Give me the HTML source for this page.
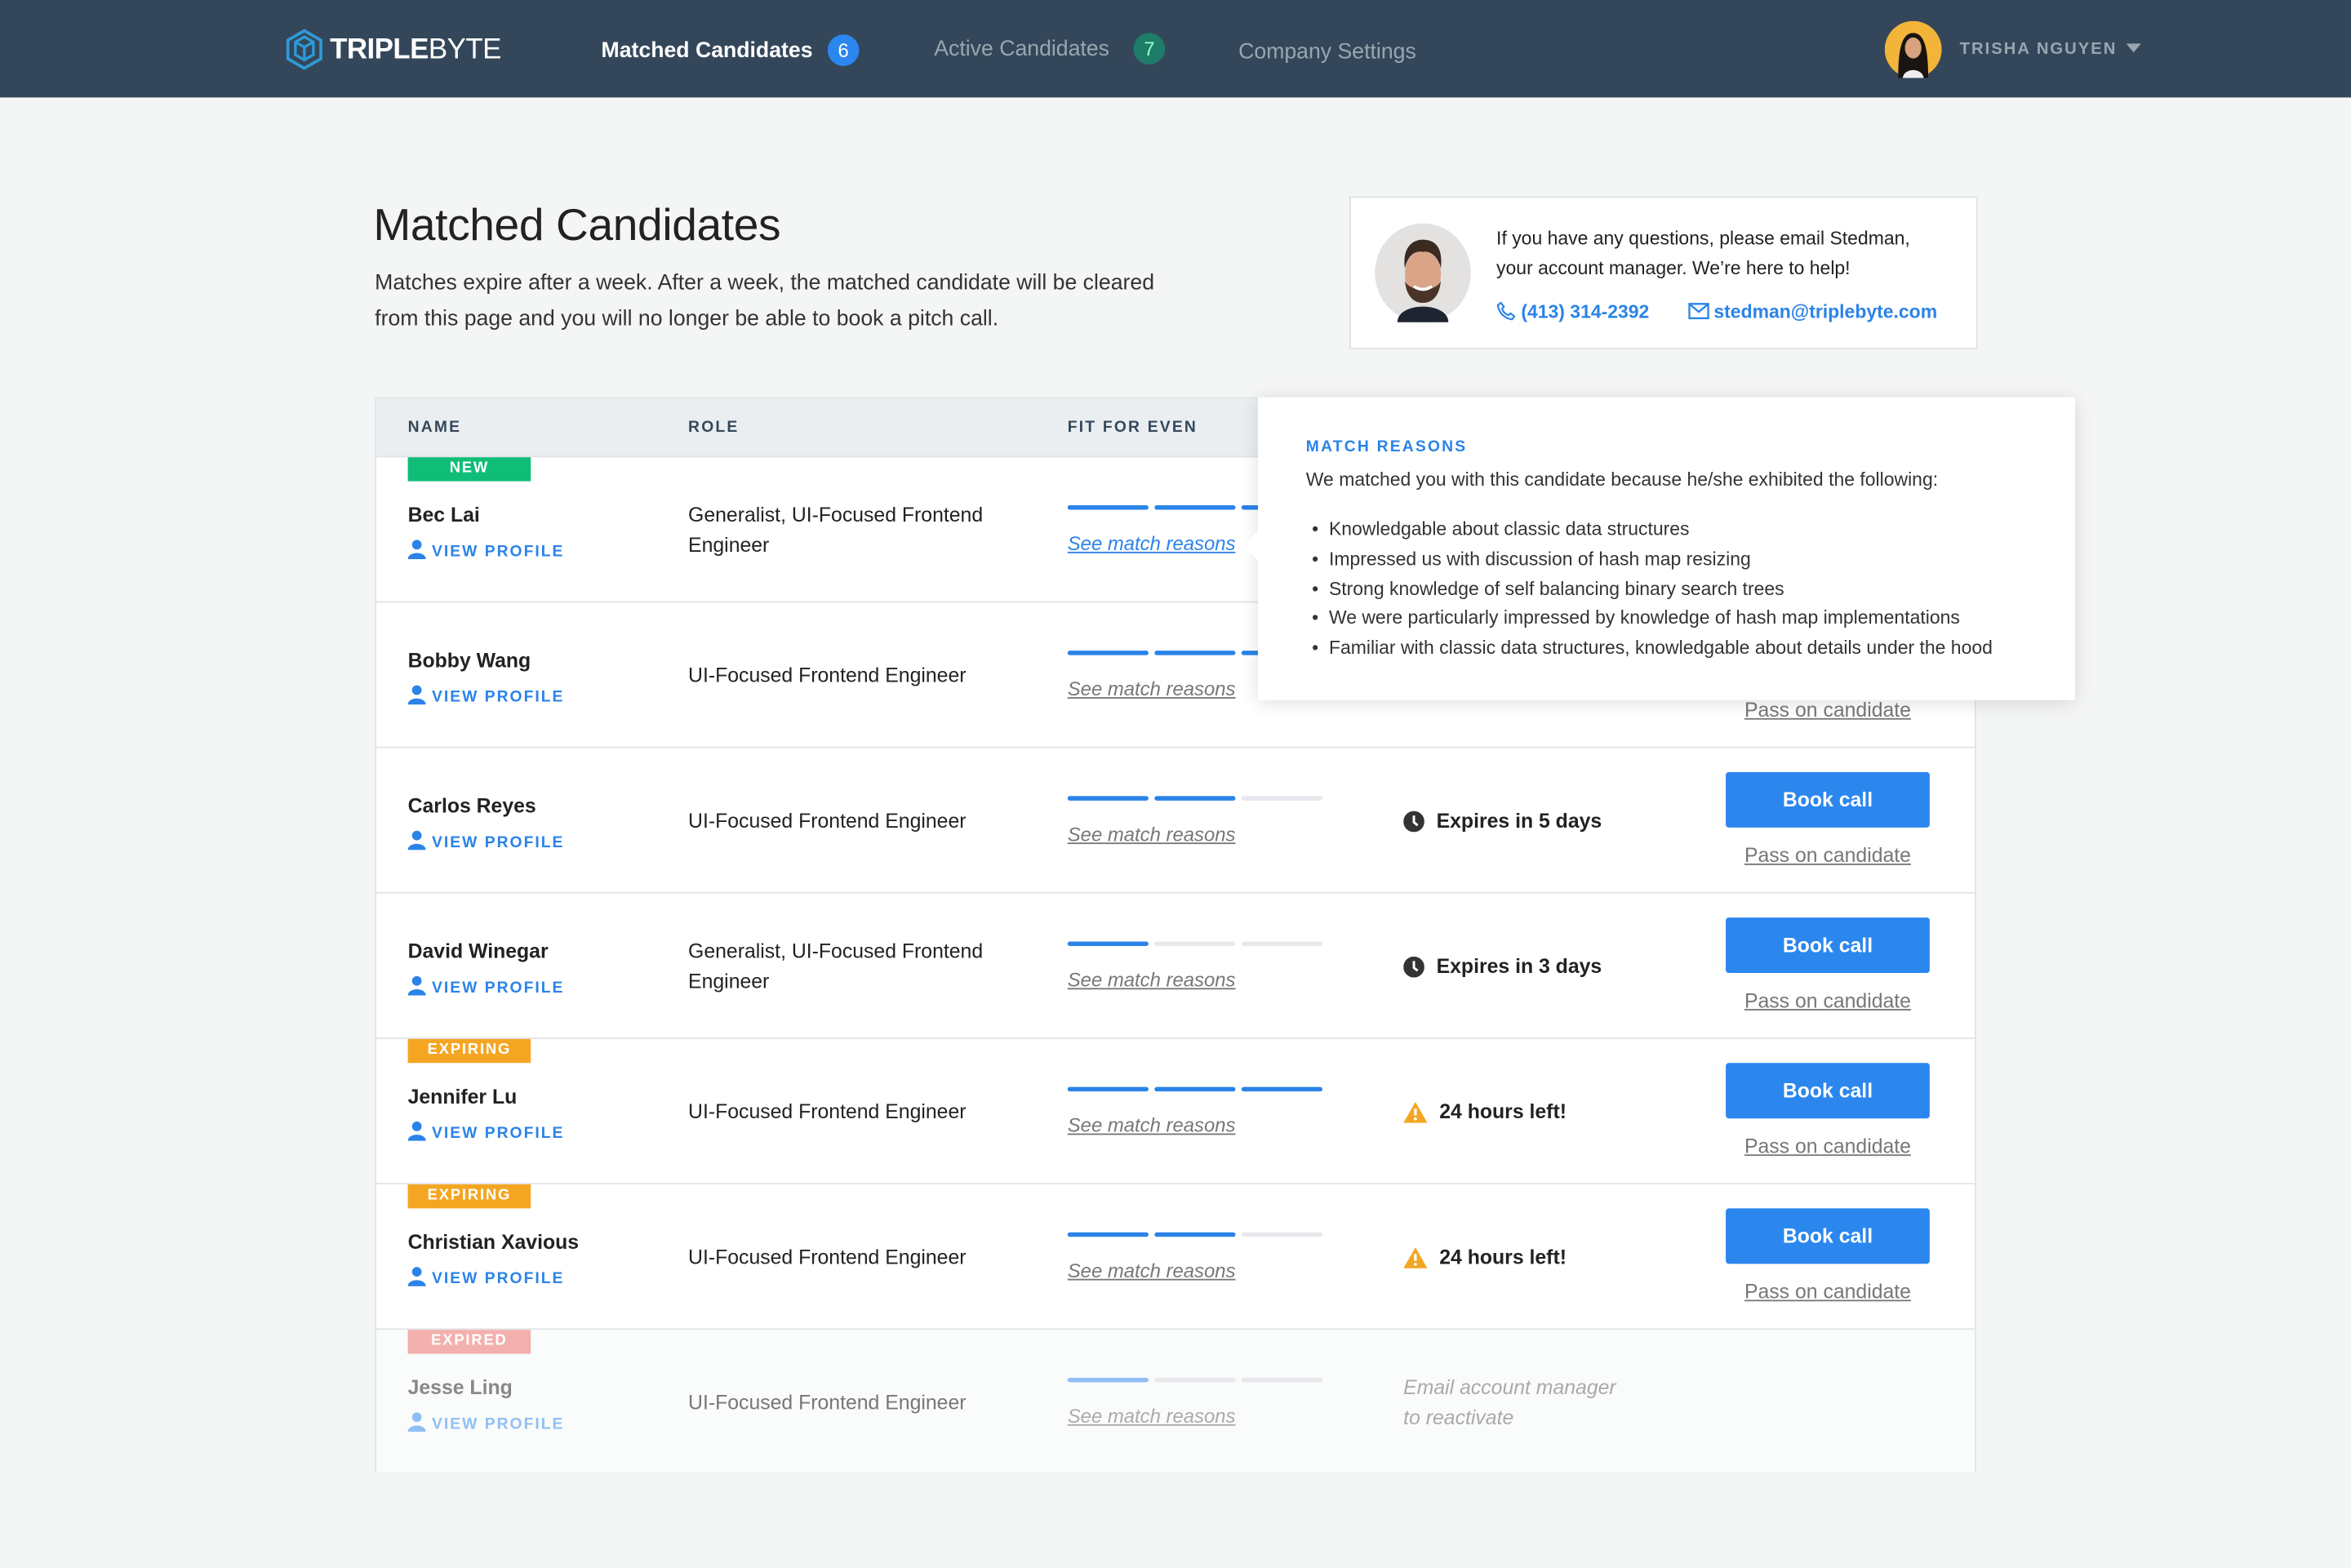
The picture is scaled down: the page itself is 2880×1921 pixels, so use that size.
<!DOCTYPE html>
<html><head><meta charset="utf-8"><style>
*{box-sizing:border-box;margin:0;padding:0}
html,body{width:2880px;height:1920px;overflow:hidden;background:#f4f5f5}
#w{position:absolute;left:0;top:0;width:1568px;height:1046px;transform:scale(1.836735);transform-origin:0 0;font-family:"Liberation Sans",sans-serif;color:#222;background:#f4f5f5}
.a{position:absolute;white-space:nowrap}
.hdr{position:absolute;left:0;top:0;width:1568px;height:65px;background:#34475a}
.badge{position:absolute;width:21px;height:21px;border-radius:50%;color:#fff;font-size:13px;text-align:center;line-height:21px}
.table{position:absolute;left:250px;top:265px;width:1068px;height:717px;background:#fff;border:1px solid #e1e4e8}
.th{position:absolute;left:0;top:0;width:1068px;height:39px;background:#eaeef1;border-bottom:1px solid #dfe3e7}
.thl{position:absolute;top:13px;font-size:10.5px;font-weight:bold;letter-spacing:1.2px;color:#34475a}
.row{position:absolute;left:0;width:1066px;height:97px;border-bottom:1px solid #e1e4e8}
.tag{position:absolute;left:21px;top:0;width:82px;height:16px;color:#fff;font-size:10px;font-weight:bold;letter-spacing:1px;text-align:center;line-height:16px}
.nm{position:absolute;left:21px;top:31px;font-size:13.5px;font-weight:bold;color:#222}
.vp{position:absolute;left:21px;top:55px;font-size:10.5px;font-weight:bold;letter-spacing:1.1px;color:#2b83e8}
.vp svg{vertical-align:-2px;margin-right:4px}
.role{position:absolute;left:208px;font-size:13.5px;line-height:20px;color:#222}
.bars{position:absolute;left:461px;top:32px;height:3px;width:170px}
.bars i{position:absolute;top:0;height:3px;width:54px;border-radius:2px;background:#e6e8ec}
.smr{position:absolute;left:461px;top:50px;font-size:13px;font-style:italic;color:#777;text-decoration:underline}
.exp{position:absolute;left:685px;top:41px;font-size:13.5px;font-weight:bold;color:#222}
.exp svg{vertical-align:-3px;margin-right:8px}
.btn{position:absolute;left:900px;top:16px;width:136px;height:37px;background:#2b87ee;border-radius:2px;color:#fff;font-size:13.5px;font-weight:bold;text-align:center;line-height:37px}
.pass{position:absolute;left:900px;top:64px;width:136px;text-align:center;font-size:13.5px;color:#777;text-decoration:underline}
</style></head><body><div id="w">
<div class="hdr">
 <svg class="a" style="left:190px;top:19px" width="26" height="28" viewBox="0 0 26 28"><path d="M13 1.5 L24 7.8 V20.2 L13 26.5 L2 20.2 V7.8 Z" fill="none" stroke="#2f9ad8" stroke-width="2"/><path d="M7 9 L13 5.6 L19 9 V17.5 L13 21 L7 17.5 Z M7 9 L13 12.4 L19 9 M13 12.4 V21" fill="none" stroke="#2f9ad8" stroke-width="1.8"/></svg>
 <div class="a" style="left:220px;top:23px;font-size:19px;color:#fff;letter-spacing:-0.3px"><b>TRIPLE</b><span style="font-weight:normal">BYTE</span></div>
 <div class="a" style="left:401px;top:26px;font-size:14.5px;font-weight:bold;color:#fff">Matched Candidates</div>
 <div class="badge" style="left:552px;top:23px;background:#2b87ee">6</div>
 <div class="a" style="left:623px;top:25px;font-size:14.5px;color:#9aa5b0">Active Candidates</div>
 <div class="badge" style="left:756px;top:22px;background:#1d7d69;color:#9fc">7</div>
 <div class="a" style="left:826px;top:27px;font-size:14.5px;color:#9aa5b0">Company Settings</div>
 <svg class="a" style="left:1257px;top:14px" width="38" height="38" viewBox="0 0 38 38"><circle cx="19" cy="19" r="19" fill="#f2b53a"/><path d="M9 38 C9 20 11 8 19 8 C27 8 29 20 29 38 Z" fill="#1a1410"/><ellipse cx="19" cy="18" rx="5.5" ry="7" fill="#d9a27e"/><path d="M12 38 C13 31 25 31 26 38Z" fill="#eee"/></svg>
 <div class="a" style="left:1307px;top:27px;font-size:11px;font-weight:bold;letter-spacing:1.1px;color:#9aa5b0">TRISHA NGUYEN</div>
 <svg class="a" style="left:1418px;top:29px" width="10" height="7"><path d="M0 0 H10 L5 6Z" fill="#9aa5b0"/></svg>
</div>

<div class="a" style="left:249px;top:134px;font-size:30px;font-weight:300;color:#222;letter-spacing:-0.2px">Matched Candidates</div>
<div class="a" style="left:250px;top:177px;font-size:14.5px;line-height:24px;color:#333;white-space:normal;width:545px">Matches expire after a week. After a week, the matched candidate will be cleared from this page and you will no longer be able to book a pitch call.</div>

<div class="a" style="left:900px;top:131px;width:419px;height:102px;background:#fff;border:1px solid #dfe2e6">
 <svg class="a" style="left:15px;top:17px" width="66" height="66" viewBox="0 0 66 66"><ellipse cx="33" cy="33" rx="32" ry="33" fill="#e4e2e0"/><path d="M16 66 C16 52 50 52 50 66Z" fill="#1e2430"/><ellipse cx="33" cy="34" rx="12" ry="16" fill="#d9a488"/><path d="M21 30 C19 14 28 10 35 11 C44 12 46 20 45 30 C43 22 38 18 33 19 C27 18 23 22 21 30Z" fill="#3a2a22"/><path d="M21 38 C22 50 28 53 33 53 C38 53 44 50 45 38 C43 46 23 46 21 38Z" fill="#4a3428"/><path d="M27 42 Q33 46 39 42" stroke="#fff" stroke-width="2" fill="none"/></svg>
 <div class="a" style="left:97px;top:17px;font-size:12.5px;line-height:20px;color:#222">If you have any questions, please email Stedman,<br>your account manager. We’re here to help!</div>
 <div class="a" style="left:97px;top:69px;font-size:12.5px;font-weight:bold;color:#2b83e8"><svg width="13" height="13" viewBox="0 0 13 13" style="vertical-align:-2px"><path d="M3 1 L5 3.5 L3.8 5 C4.5 7 6 8.5 8 9.2 L9.5 8 L12 10 L10.5 12 C5.5 11.5 1.5 7.5 1 2.5Z" fill="none" stroke="#2b83e8" stroke-width="1.2"/></svg> (413) 314-2392</div>
 <div class="a" style="left:225px;top:69px;font-size:12.5px;font-weight:bold;color:#2b83e8"><svg width="14" height="11" viewBox="0 0 14 11" style="vertical-align:-1px;margin-right:3px"><rect x="0.7" y="0.7" width="12.6" height="9.6" fill="none" stroke="#2b83e8" stroke-width="1.3"/><path d="M1 1 L7 6 L13 1" fill="none" stroke="#2b83e8" stroke-width="1.3"/></svg>stedman@triplebyte.com</div>
</div>

<div class="table">
 <div class="th"><div class="thl" style="left:21px">NAME</div><div class="thl" style="left:208px">ROLE</div><div class="thl" style="left:461px">FIT FOR EVEN</div></div>

 <div class="row" style="top:39px"><div class="tag" style="background:#10bd78">NEW</div><div class="nm">Bec Lai</div><div class="vp"><svg width="12" height="13" viewBox="0 0 12 13"><circle cx="6" cy="3.3" r="3.2" fill="#2b83e8"/><path d="M0 13 C0 7.5 12 7.5 12 13Z" fill="#2b83e8"/></svg>VIEW PROFILE</div><div class="role" style="top:29px">Generalist, UI-Focused Frontend<br>Engineer</div><div class="bars"><i style="left:0;background:#2b83e8"></i><i style="left:58px;background:#2b83e8"></i><i style="left:116px;background:#2b83e8"></i></div><div class="smr" style="color:#2b83e8">See match reasons</div></div>

 <div class="row" style="top:136px"><div class="nm">Bobby Wang</div><div class="vp"><svg width="12" height="13" viewBox="0 0 12 13"><circle cx="6" cy="3.3" r="3.2" fill="#2b83e8"/><path d="M0 13 C0 7.5 12 7.5 12 13Z" fill="#2b83e8"/></svg>VIEW PROFILE</div><div class="role" style="top:39px">UI-Focused Frontend Engineer</div><div class="bars"><i style="left:0;background:#2b83e8"></i><i style="left:58px;background:#2b83e8"></i><i style="left:116px;background:#2b83e8"></i></div><div class="smr">See match reasons</div><div class="pass">Pass on candidate</div></div>

 <div class="row" style="top:233px"><div class="nm">Carlos Reyes</div><div class="vp"><svg width="12" height="13" viewBox="0 0 12 13"><circle cx="6" cy="3.3" r="3.2" fill="#2b83e8"/><path d="M0 13 C0 7.5 12 7.5 12 13Z" fill="#2b83e8"/></svg>VIEW PROFILE</div><div class="role" style="top:39px">UI-Focused Frontend Engineer</div><div class="bars"><i style="left:0;background:#2b83e8"></i><i style="left:58px;background:#2b83e8"></i><i style="left:116px"></i></div><div class="smr">See match reasons</div><div class="exp"><svg width="14" height="14" viewBox="0 0 14 14"><circle cx="7" cy="7" r="7" fill="#333"/><path d="M7 3 V7.5 L9.5 9.5" stroke="#fff" stroke-width="1.6" fill="none"/></svg>Expires in 5 days</div><div class="btn">Book call</div><div class="pass">Pass on candidate</div></div>

 <div class="row" style="top:330px"><div class="nm">David Winegar</div><div class="vp"><svg width="12" height="13" viewBox="0 0 12 13"><circle cx="6" cy="3.3" r="3.2" fill="#2b83e8"/><path d="M0 13 C0 7.5 12 7.5 12 13Z" fill="#2b83e8"/></svg>VIEW PROFILE</div><div class="role" style="top:29px">Generalist, UI-Focused Frontend<br>Engineer</div><div class="bars"><i style="left:0;background:#2b83e8"></i><i style="left:58px"></i><i style="left:116px"></i></div><div class="smr">See match reasons</div><div class="exp"><svg width="14" height="14" viewBox="0 0 14 14"><circle cx="7" cy="7" r="7" fill="#333"/><path d="M7 3 V7.5 L9.5 9.5" stroke="#fff" stroke-width="1.6" fill="none"/></svg>Expires in 3 days</div><div class="btn">Book call</div><div class="pass">Pass on candidate</div></div>

 <div class="row" style="top:427px"><div class="tag" style="background:#f4a623">EXPIRING</div><div class="nm">Jennifer Lu</div><div class="vp"><svg width="12" height="13" viewBox="0 0 12 13"><circle cx="6" cy="3.3" r="3.2" fill="#2b83e8"/><path d="M0 13 C0 7.5 12 7.5 12 13Z" fill="#2b83e8"/></svg>VIEW PROFILE</div><div class="role" style="top:39px">UI-Focused Frontend Engineer</div><div class="bars"><i style="left:0;background:#2b83e8"></i><i style="left:58px;background:#2b83e8"></i><i style="left:116px;background:#2b83e8"></i></div><div class="smr">See match reasons</div><div class="exp"><svg width="16" height="14" viewBox="0 0 16 14"><path d="M8 0 L16 14 H0Z" fill="#f4a623"/><path d="M8 4.5 V9" stroke="#fff" stroke-width="1.8"/><circle cx="8" cy="11.3" r="1" fill="#fff"/></svg>24 hours left!</div><div class="btn">Book call</div><div class="pass">Pass on candidate</div></div>

 <div class="row" style="top:524px"><div class="tag" style="background:#f4a623">EXPIRING</div><div class="nm">Christian Xavious</div><div class="vp"><svg width="12" height="13" viewBox="0 0 12 13"><circle cx="6" cy="3.3" r="3.2" fill="#2b83e8"/><path d="M0 13 C0 7.5 12 7.5 12 13Z" fill="#2b83e8"/></svg>VIEW PROFILE</div><div class="role" style="top:39px">UI-Focused Frontend Engineer</div><div class="bars"><i style="left:0;background:#2b83e8"></i><i style="left:58px;background:#2b83e8"></i><i style="left:116px"></i></div><div class="smr">See match reasons</div><div class="exp"><svg width="16" height="14" viewBox="0 0 16 14"><path d="M8 0 L16 14 H0Z" fill="#f4a623"/><path d="M8 4.5 V9" stroke="#fff" stroke-width="1.8"/><circle cx="8" cy="11.3" r="1" fill="#fff"/></svg>24 hours left!</div><div class="btn">Book call</div><div class="pass">Pass on candidate</div></div>

 <div class="row" style="top:621px;background:#fafbfb;border-bottom:none;height:95px"><div class="tag" style="background:#f2b0ae">EXPIRED</div><div class="nm" style="color:#888">Jesse Ling</div><div class="vp" style="color:#8fc0f4"><svg width="12" height="13" viewBox="0 0 12 13"><circle cx="6" cy="3.3" r="3.2" fill="#8fc0f4"/><path d="M0 13 C0 7.5 12 7.5 12 13Z" fill="#8fc0f4"/></svg>VIEW PROFILE</div><div class="role" style="top:39px;color:#777">UI-Focused Frontend Engineer</div><div class="bars"><i style="left:0;background:#8fc0f4"></i><i style="left:58px"></i><i style="left:116px"></i></div><div class="smr" style="color:#aaa">See match reasons</div><div class="a" style="left:685px;top:29px;font-size:13.5px;line-height:20px;font-style:italic;color:#aaa">Email account manager<br>to reactivate</div></div>
</div>

<div class="a" style="left:839px;top:265px;width:545px;height:202px;background:#fff;box-shadow:0 2px 12px rgba(0,0,0,0.13)">
 <div class="a" style="left:-7px;top:92px;width:14px;height:14px;background:#fff;transform:rotate(45deg)"></div>
 <div class="a" style="left:32px;top:27px;font-size:10.5px;font-weight:bold;letter-spacing:1.2px;color:#2b83e8">MATCH REASONS</div>
 <div class="a" style="left:32px;top:48px;font-size:12.5px;color:#333">We matched you with this candidate because he/she exhibited the following:</div>
 <div class="a" style="left:36px;top:79px;font-size:12.5px;line-height:19.8px;color:#333">• &nbsp;Knowledgable about classic data structures<br>• &nbsp;Impressed us with discussion of hash map resizing<br>• &nbsp;Strong knowledge of self balancing binary search trees<br>• &nbsp;We were particularly impressed by knowledge of hash map implementations<br>• &nbsp;Familiar with classic data structures, knowledgable about details under the hood</div>
</div>
</div></body></html>
